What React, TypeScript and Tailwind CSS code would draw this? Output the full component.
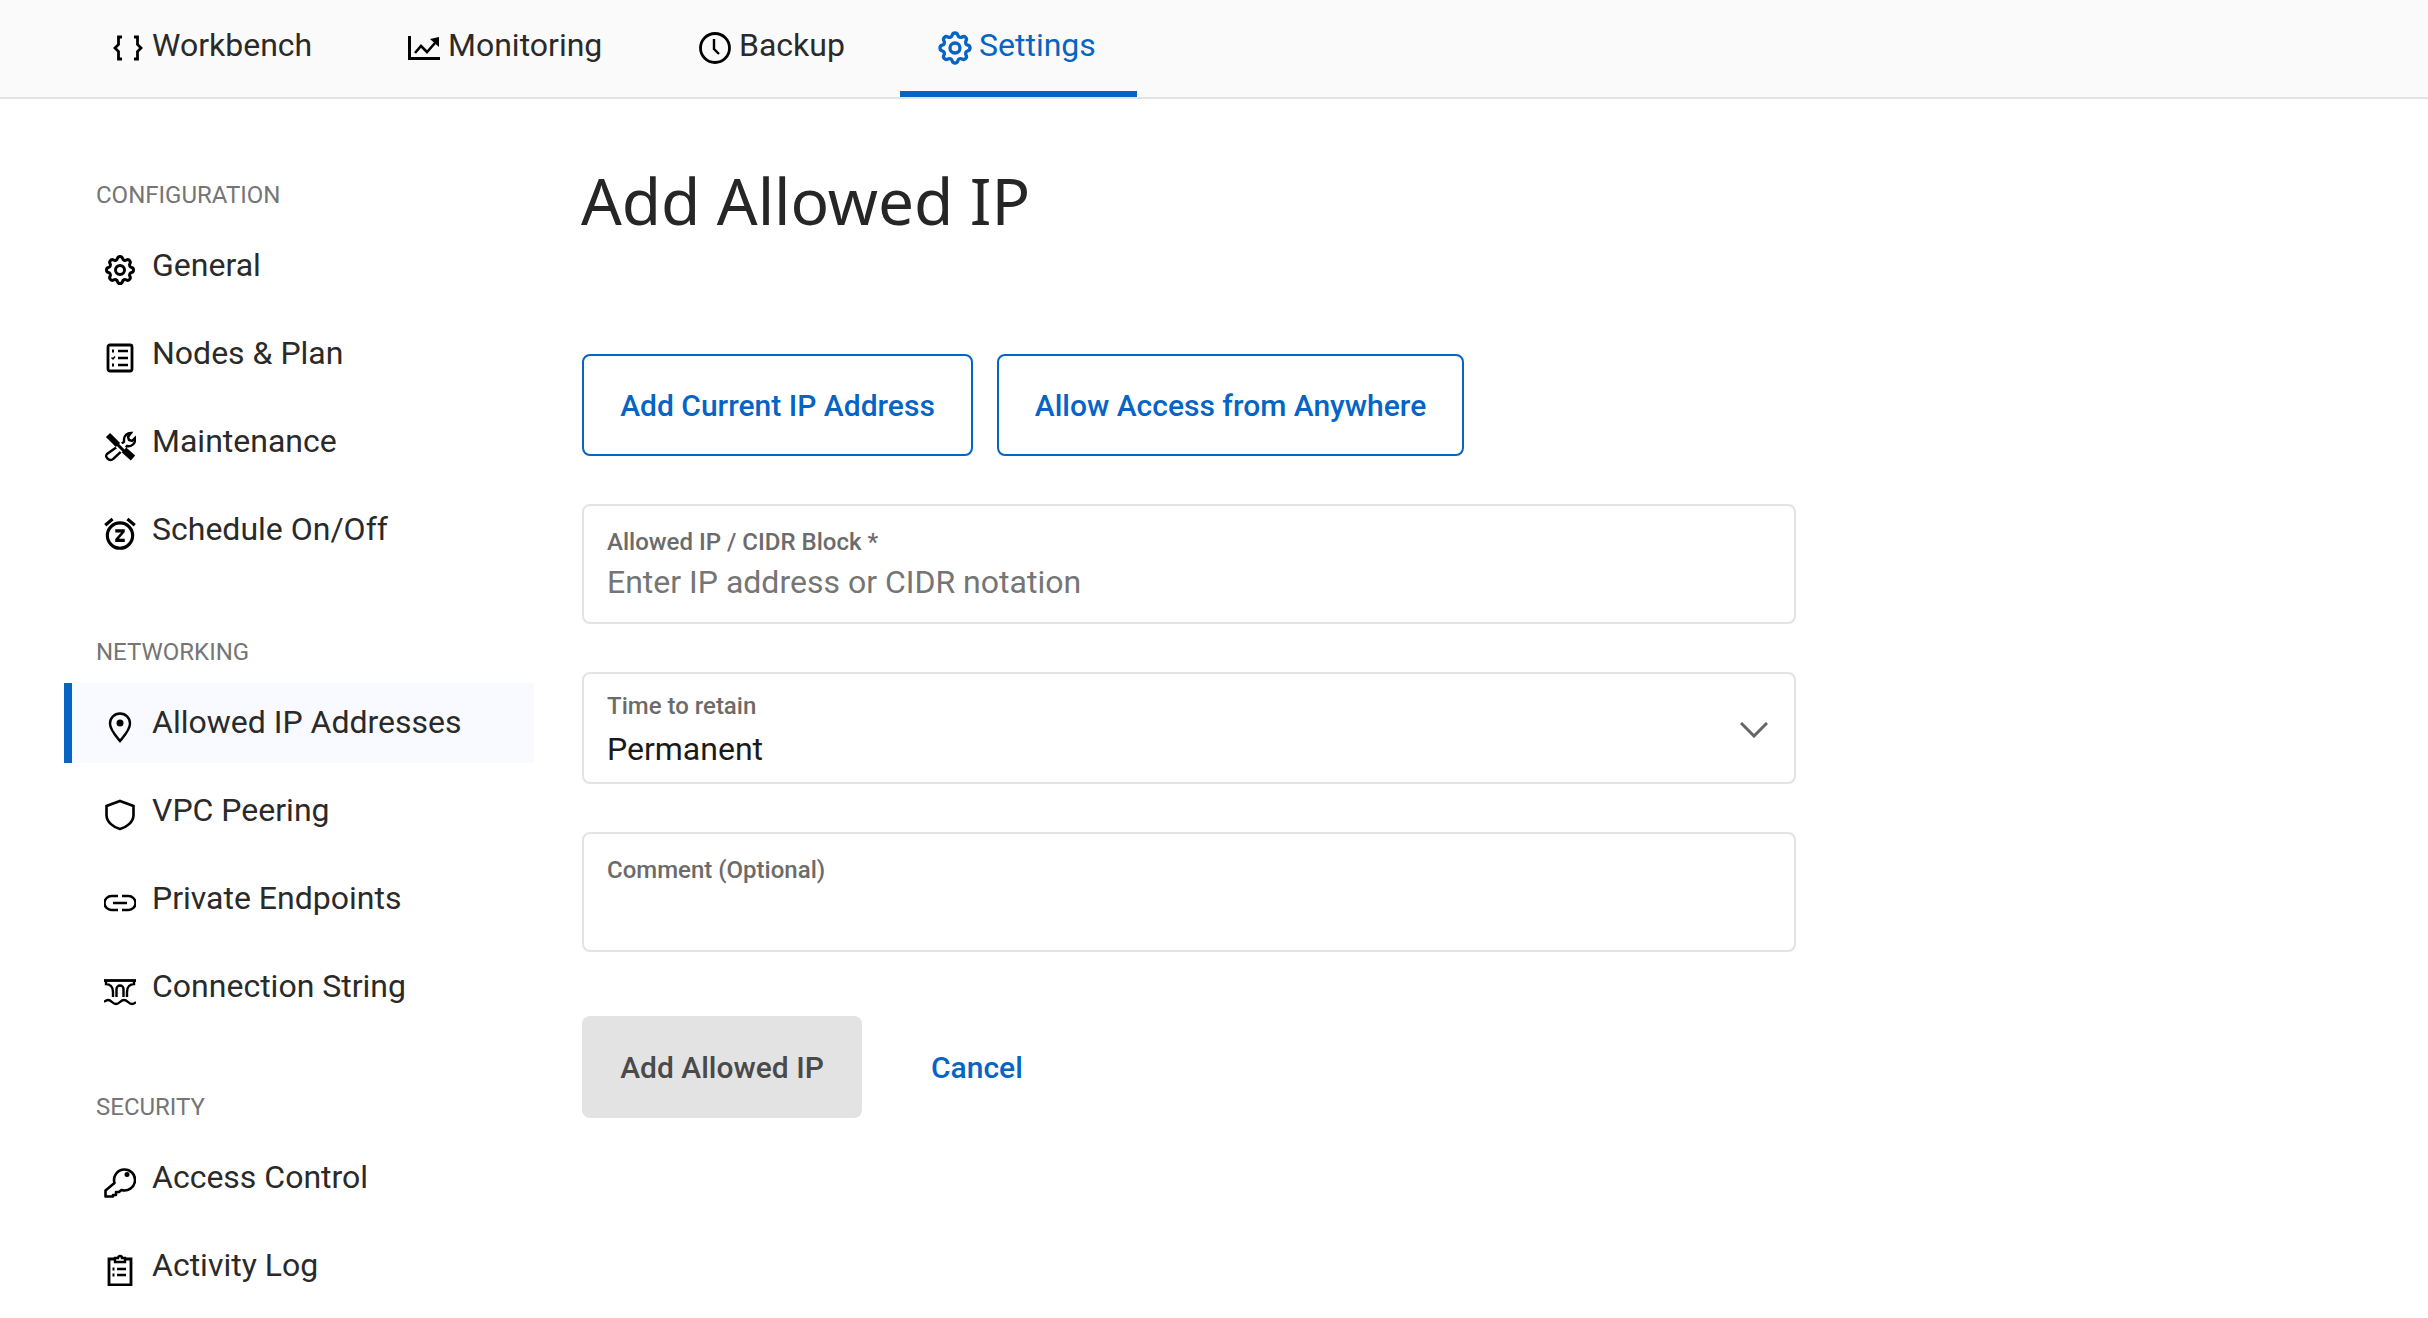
import * as React from "react";
import { TbSettings } from "react-icons/tb";
import { MdOutlineSnooze } from "react-icons/md";

const BLUE = "text-[#0664c4]";

function Ico({ children, className }: { children: React.ReactNode; className?: string }) {
  return (
    <svg viewBox="0 0 32 32" fill="none" stroke="currentColor" strokeWidth="2.4" className={className ?? "h-8 w-8 shrink-0 text-black"}>
      {children}
    </svg>
  );
}

const TAB_ICON = "mt-[7px] h-8 w-8 shrink-0 text-black";

const Braces = () => (
  <Ico className={TAB_ICON}>
    <path d="M10 5H6.500v7.500L3 16l3.500 3.500V27H10" strokeWidth="2.800" />
    <path d="M22 5h3.500v7.500L29 16l-3.500 3.500V27H22" strokeWidth="2.800" />
  </Ico>
);
const Chart = () => (
  <Ico className={TAB_ICON}>
    <path d="M1.500 4v22.500H32" strokeWidth="3" />
    <path d="M7 21l6-7 6 6 8-9" strokeWidth="2.600" />
    <path d="M22 7l9-2v10z" fill="currentColor" stroke="none" />
  </Ico>
);
const Clock = () => (
  <Ico className={TAB_ICON}>
    <circle cx="16" cy="16" r="14.500" strokeWidth="2.800" />
    <path d="M15 7v10l5 5" />
  </Ico>
);
const Nodes = () => (
  <Ico>
    <rect x="4" y="3" width="24" height="26" rx="2" strokeWidth="2.800" />
    <path d="M14 9h10M14 16h10M14 23h10" />
    <path d="M8 9h2M8 23h2" strokeWidth="3" />
    <path d="M7.500 15.500l1.500 1.500 2-2.500" strokeWidth="1.500" />
  </Ico>
);
const Tools = () => (
  <Ico>
    <path d="M20 9c0-3 3-6 7-6l-3 4 1 3 3 1 3-3c1 5-3 9-8 8L9 29c-3 3-9-2-6-5L20 12z" fill="white" strokeWidth="2.400" />
    <path d="M4 5l24 23" stroke="white" strokeWidth="7" />
    <path d="M4 5l10 10" strokeWidth="6" />
    <path d="M12 13l9 9" strokeWidth="3" />
    <path d="M20 20l9 8" strokeWidth="6.500" />
  </Ico>
);
const Pin = () => (
  <Ico>
    <path d="M16 30C12 25 6 19 6 12.500a10 10 0 0120 0C26 19 20 25 16 30z" />
    <circle cx="16" cy="12" r="3.500" fill="currentColor" stroke="none" />
  </Ico>
);
const Shield = () => (
  <Ico>
    <path d="M16 2l13.500 5v9c0 7-6.500 12-13.500 14C9 28 2.500 23 2.500 16V7z" strokeWidth="2.600" />
  </Ico>
);
const Chain = () => (
  <Ico>
    <path d="M14 9H7.500a7 7 0 000 14H14M18 9h6.500a7 7 0 010 14H18M9 16h14" />
  </Ico>
);
const Bridge = () => (
  <Ico>
    <path d="M0 5.500h32" strokeWidth="2.800" />
    <path d="M2 5.500v3.500c4 0 7 3 7 8v5M30 5.500v3.500c-4 0-7 3-7 8v5M12.500 22v-8a3.500 3.500 0 017 0v8" />
    <path d="M0 27c2.500-2.500 5.500-2.500 8 0s5.500 2.500 8 0 5.500-2.500 8 0 5.500 2.500 8 0" />
  </Ico>
);
const Key = () => (
  <Ico>
    <path d="M10.500 17a10.500 10.500 0 117 7l-2.500 2h-3v3H9v1.500H1.500v-6z" strokeWidth="2.600" strokeLinejoin="round" />
    <circle cx="23" cy="8.500" r="2.500" fill="currentColor" stroke="none" />
  </Ico>
);
const Clipboard = () => (
  <Ico>
    <path d="M11 5H5v26h22V5h-6" strokeWidth="2.800" />
    <path d="M11 8V4h3a2 2 0 014 0h3v4z" />
    <path d="M13 15h9M13 21h9" />
    <path d="M8.500 15h2M8.500 21h2" strokeWidth="3" />
  </Ico>
);

const SECTIONS = [
  {
    label: "Configuration",
    pad: "pt-0",
    items: [
      { name: "General", icon: <TbSettings className="h-9 w-9 shrink-0 text-black" /> },
      { name: "Nodes & Plan", icon: <Nodes /> },
      { name: "Maintenance", icon: <Tools /> },
      { name: "Schedule On/Off", icon: <MdOutlineSnooze className="h-[38px] w-[38px] shrink-0 text-black" /> },
    ],
  },
  {
    label: "Networking",
    pad: "pt-[66px]",
    items: [
      { name: "Allowed IP Addresses", icon: <Pin />, active: true },
      { name: "VPC Peering", icon: <Shield /> },
      { name: "Private Endpoints", icon: <Chain /> },
      { name: "Connection String", icon: <Bridge /> },
    ],
  },
  {
    label: "Security",
    pad: "pt-[64px]",
    items: [
      { name: "Access Control", icon: <Key /> },
      { name: "Activity Log", icon: <Clipboard /> },
    ],
  },
];

const TABS = [
  { name: "Workbench", icon: <Braces />, w: "w-[296px]" },
  { name: "Monitoring", icon: <Chart />, w: "w-[291px]" },
  { name: "Backup", icon: <Clock />, w: "w-[241px]" },
];

function Field({ label, className, children }: { label: string; className: string; children?: React.ReactNode }) {
  return (
    <div className={`relative w-[1214px] rounded-lg border-2 border-[#e3e3e3] bg-white px-[23px] ${className}`}>
      <div className="text-[24px] font-medium leading-[32px] text-[#6b6b6b]">{label}</div>
      {children}
    </div>
  );
}

export default function App() {
  return (
    <div className="h-[1318px] w-[2428px] overflow-hidden bg-white font-['Roboto',sans-serif]">
      <header className="flex h-[99px] border-b-2 border-[#e3e3e3] bg-[#fafafa] pl-[72px]">
        {TABS.map((t) => (
          <div key={t.name} className={`flex h-[97px] items-start gap-[8px] pl-[40px] pt-[25px] text-[32px] leading-[40px] text-[#2a2a2a] ${t.w}`}>
            {t.icon}
            <span>{t.name}</span>
          </div>
        ))}
        <div className={`flex h-[97px] w-[237px] items-start gap-[4px] border-b-[6px] border-[#0664c4] pl-[35px] pt-[25px] text-[32px] leading-[40px] ${BLUE}`}>
          <TbSettings className="mt-[3px] h-10 w-10 shrink-0" />
          <span>Settings</span>
        </div>
      </header>

      <div className="flex">
        <nav className="w-[518px] shrink-0 pl-[64px] pt-[80px]">
          {SECTIONS.map((s) => (
            <section key={s.label} className={s.pad}>
              <div className="pl-[32px] text-[24px] uppercase leading-[32px] text-[#757575]">{s.label}</div>
              <div className="mt-[15px] flex w-[470px] flex-col gap-[8px]">
                {s.items.map((it) => (
                  <div
                    key={it.name}
                    className={`flex h-[80px] items-center border-l-[8px] pl-[24px] text-[32px] text-[#2a2a2a] ${it.active ? "border-[#0664c4] bg-[#f9faff]" : "border-transparent"}`}
                  >
                    <span className="mr-[8px] flex w-[48px] shrink-0 justify-center pt-[8px]">{it.icon}</span>
                    <span className="-mt-[2px]">{it.name}</span>
                  </div>
                ))}
              </div>
            </section>
          ))}
        </nav>

        <main className="pl-[63px]">
          <h1 className="mt-[62px] font-['Noto_Sans',sans-serif] text-[64px] leading-[80px] tracking-[-0.1px] text-[#262626]">Add Allowed IP</h1>
          <div className="ml-[1px] mt-[113px] flex gap-[24px]">
            <button className={`h-[102px] w-[391px] rounded-lg border-2 border-[#0664c4] bg-white text-[30px] font-medium ${BLUE}`}>Add Current IP Address</button>
            <button className={`h-[102px] w-[467px] rounded-lg border-2 border-[#0664c4] bg-white text-[30px] font-medium ${BLUE}`}>Allow Access from Anywhere</button>
          </div>
          <div className="ml-[1px] mt-[48px] flex flex-col gap-[48px]">
            <Field label="Allowed IP / CIDR Block *" className="h-[120px] pt-[20px]">
              <div className="text-[32px] leading-[48px] text-[#757575]">Enter IP address or CIDR notation</div>
            </Field>
            <Field label="Time to retain" className="h-[112px] pt-[16px]">
              <div className="text-[32px] leading-[54px] text-[#1a1a1a]">Permanent</div>
              <svg viewBox="0 0 28 16" fill="none" stroke="#666" strokeWidth="3" className="absolute right-[26px] top-[48px] h-4 w-7">
                <path d="M1 1l13 13L27 1" />
              </svg>
            </Field>
            <Field label="Comment (Optional)" className="h-[120px] pt-[20px]" />
          </div>
          <div className="ml-[1px] mt-[64px] flex items-center gap-[69px]">
            <button className="h-[102px] w-[280px] rounded-lg bg-[#e3e3e3] text-[30px] font-medium text-[#4a4a4a]">Add Allowed IP</button>
            <button className={`text-[30px] font-medium ${BLUE}`}>Cancel</button>
          </div>
        </main>
      </div>
    </div>
  );
}
